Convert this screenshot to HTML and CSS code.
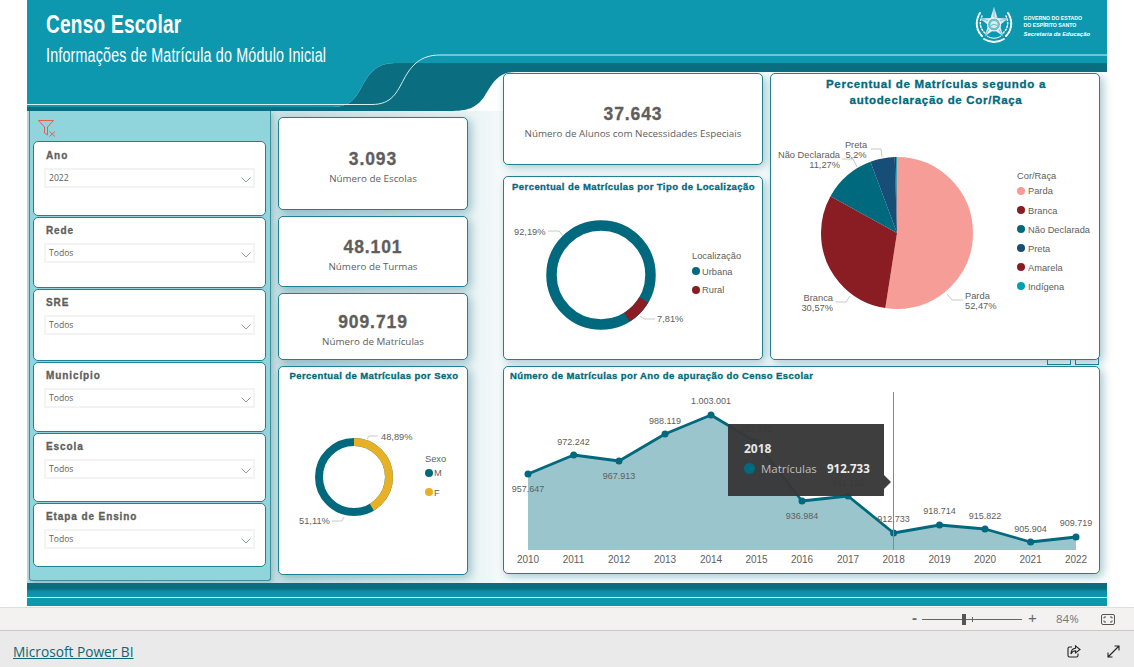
FILE: index.html
```html
<!DOCTYPE html>
<html lang="pt-BR">
<head>
<meta charset="utf-8">
<title>Censo Escolar</title>
<link rel="stylesheet" href="styles.css">
</head>
<body>
<main class="report">
  <header class="head">
    <svg class="head-bg" viewBox="27 0 1080 120" width="1080" height="120" aria-hidden="true">
      <path fill="#0d98b0" d="M27 0H1107V63H395C375 63 368 75 360 90C352 104 345 107 330 107H27Z"/>
      <path fill="#0b6e80" d="M27 107H330C345 107 352 104 360 90C368 75 375 63 395 63H1107V72H515C497 72 492 85 484 97C476 108 468 111 450 111H27Z"/>
      <path fill="none" stroke="#d5f0f4" stroke-width="1" d="M27 104.500H372C392 104.500 397 92 404 79C411 66 420 55 440 55H1107"/>
    </svg>
    <div class="head-text">
      <h1 class="title">Censo Escolar</h1>
      <p class="subtitle">Informações de Matrícula do Módulo Inicial</p>
    </div>
    <div class="brand">
      <svg class="crest" viewBox="0 0 38 38" width="38" height="38" aria-hidden="true">
        <g fill="none" stroke="#fff" stroke-linecap="round">
          <path stroke-width="2" stroke-dasharray="1.800 1.500" d="M7 30C1 24 0 15 5 7"/>
          <path stroke-width="1.500" stroke-dasharray="1.500 2" d="M10 27C5 23 4 16 7 10"/>
          <path stroke-width="2" stroke-dasharray="1.800 1.500" d="M31 30C37 24 38 15 33 7"/>
          <path stroke-width="1.500" stroke-dasharray="1.500 2" d="M28 27C33 23 34 16 31 10"/>
          <path stroke-width="1.800" d="M9 33C15 37 23 37 29 33"/>
          <path stroke-width="1" d="M12 30C16 33 22 33 26 30"/>
        </g>
        <path fill="#fff" fill-opacity=".82" d="M19 1L22.500 12L33 12.500L25 19L28 30L19 24L10 30L13 19L5 12.500L15.500 12Z"/>
        <path fill="none" stroke="#5fb8c8" stroke-width=".7" d="M19 1V11M22.500 12L19 11.500M33 12.500L24 15M28 30L23 22M10 30L15 22M5 12.500L14 15"/>
        <circle cx="19" cy="18.500" r="6.500" fill="#6fbecd" stroke="#fff" stroke-width="1"/>
        <circle cx="19" cy="18.500" r="3.500" fill="#d4eff3"/>
        <path fill="none" stroke="#4aa9bb" stroke-width=".8" d="M15.800 19.500Q19 17 22.200 19.500"/>
      </svg>
      <div class="brand-text">
        <span>GOVERNO DO ESTADO</span>
        <span>DO ESPÍRITO SANTO</span>
        <em>Secretaria da Educação</em>
      </div>
    </div>
  </header>

  <div class="body">
    <aside class="panel">
      <svg class="clear-icon" viewBox="0 0 18 17" width="18" height="17" aria-hidden="true">
        <path fill="none" stroke="#e2604f" stroke-width="1" d="M.5.500H15.500L9.500 7V15L6.500 13V7Z"/>
        <path fill="none" stroke="#e2604f" stroke-width="1" d="M11.500 11.500L17 16.500M17 11.500L11.500 16.500"/>
      </svg>
      <div class="filters">
        <section class="filter"><h2>Ano</h2><div class="drop"><span>2022</span><svg viewBox="0 0 10 6" width="10" height="6" aria-hidden="true"><path d="M.5.500L5 5L9.500.500"/></svg></div></section>
        <section class="filter"><h2>Rede</h2><div class="drop"><span>Todos</span><svg viewBox="0 0 10 6" width="10" height="6" aria-hidden="true"><path d="M.5.500L5 5L9.500.500"/></svg></div></section>
        <section class="filter"><h2>SRE</h2><div class="drop"><span>Todos</span><svg viewBox="0 0 10 6" width="10" height="6" aria-hidden="true"><path d="M.5.500L5 5L9.500.500"/></svg></div></section>
        <section class="filter"><h2>Município</h2><div class="drop"><span>Todos</span><svg viewBox="0 0 10 6" width="10" height="6" aria-hidden="true"><path d="M.5.500L5 5L9.500.500"/></svg></div></section>
        <section class="filter"><h2>Escola</h2><div class="drop"><span>Todos</span><svg viewBox="0 0 10 6" width="10" height="6" aria-hidden="true"><path d="M.5.500L5 5L9.500.500"/></svg></div></section>
        <section class="filter"><h2>Etapa de Ensino</h2><div class="drop"><span>Todos</span><svg viewBox="0 0 10 6" width="10" height="6" aria-hidden="true"><path d="M.5.500L5 5L9.500.500"/></svg></div></section>
      </div>
    </aside>

    <div class="col-mid">
      <section class="card kpi kpi-a"><strong>3.093</strong><span>Número de Escolas</span></section>
      <section class="card kpi kpi-b"><strong>48.101</strong><span>Número de Turmas</span></section>
      <section class="card kpi kpi-c"><strong>909.719</strong><span>Número de Matrículas</span></section>
      <section class="card chart-sex">
        <svg class="chart" viewBox="279 367 188 207" width="188" height="207">
          <text class="ctitle" x="374" y="379" text-anchor="middle">Percentual de Matrículas por Sexo</text>
          <g transform="rotate(-90 354 477)" fill="none" stroke-width="8">
            <circle cx="354" cy="477" r="35" stroke="#00697d"/>
            <circle cx="354" cy="477" r="35" stroke="#e8b025" pathLength="100" stroke-dasharray="48.89 100" stroke-dashoffset="7.4"/>
          </g>
          <path class="lead" d="M367 439L369 436H378M332 521H342L344 517"/>
          <text class="lbl" x="381" y="439.500">48,89%</text>
          <text class="lbl" x="299" y="523.500">51,11%</text>
          <text class="legh" x="425" y="462">Sexo</text>
          <circle cx="429" cy="473" r="4" fill="#00697d"/><text class="leg" x="434" y="476">M</text>
          <circle cx="429" cy="492" r="4" fill="#e8b025"/><text class="leg" x="434" y="495.500">F</text>
        </svg>
      </section>
    </div>

    <div class="col-right">
      <div class="peek peek-a"></div>
      <div class="peek peek-b"></div>
      <div class="stack">
        <section class="card kpi kpi-d"><strong>37.643</strong><span>Número de Alunos com Necessidades Especiais</span></section>
        <section class="card chart-loc">
          <svg class="chart" viewBox="504 177 258 182" width="258" height="182">
            <text class="ctitle" x="633.500" y="189.500" text-anchor="middle">Percentual de Matrículas por Tipo de Localização</text>
            <g transform="rotate(-90 601 275)" fill="none" stroke-width="10.500">
              <circle cx="601" cy="275" r="49.500" stroke="#00697d"/>
              <circle cx="601" cy="275" r="49.500" stroke="#8a1c24" pathLength="100" stroke-dasharray="7.81 100" stroke-dashoffset="-33.4"/>
            </g>
            <path class="lead" d="M548 231H559L563 236M640 316L644 319H655"/>
            <text class="lbl" x="514" y="234.500">92,19%</text>
            <text class="lbl" x="657" y="321.500">7,81%</text>
            <text class="legh" x="692" y="258.500">Localização</text>
            <circle cx="696" cy="271" r="4" fill="#00697d"/><text class="leg" x="702" y="274.500">Urbana</text>
            <circle cx="696" cy="290" r="4" fill="#8a1c24"/><text class="leg" x="702" y="293">Rural</text>
          </svg>
        </section>
      </div>
      <section class="card chart-pie">
        <svg class="chart" viewBox="771 74 328 285" width="328" height="285">
          <text class="ctitle ctitle-lg" x="936" y="88" text-anchor="middle">Percentual de Matrículas segundo a</text>
          <text class="ctitle ctitle-lg" x="936" y="104" text-anchor="middle">autodeclaração de Cor/Raça</text>
          <g transform="rotate(-90 897 233)" fill="none" stroke-width="76">
            <circle cx="897" cy="233" r="38" pathLength="100" stroke="#f59d96" stroke-dasharray="52.47 100"/>
            <circle cx="897" cy="233" r="38" pathLength="100" stroke="#8a1c24" stroke-dasharray="30.57 100" stroke-dashoffset="-52.47"/>
            <circle cx="897" cy="233" r="38" pathLength="100" stroke="#00697d" stroke-dasharray="11.27 100" stroke-dashoffset="-83.04"/>
            <circle cx="897" cy="233" r="38" pathLength="100" stroke="#164e78" stroke-dasharray="5.2 100" stroke-dashoffset="-94.31"/>
            <circle cx="897" cy="233" r="38" pathLength="100" stroke="#8a1c24" stroke-dasharray="0.3 100" stroke-dashoffset="-99.51"/>
            <circle cx="897" cy="233" r="38" pathLength="100" stroke="#00a0b4" stroke-dasharray="0.19 100" stroke-dashoffset="-99.81"/>
          </g>
          <path class="lead" d="M871 149H881L882 157M842 159H853L857 167M836 302H846L850 296M947 294L952 300H963"/>
          <text class="lbl" x="856" y="147.500" text-anchor="middle">Preta</text>
          <text class="lbl" x="856" y="157.500" text-anchor="middle">5,2%</text>
          <text class="lbl" x="840" y="157.500" text-anchor="end">Não Declarada</text>
          <text class="lbl" x="840" y="167.500" text-anchor="end">11,27%</text>
          <text class="lbl" x="833" y="300.500" text-anchor="end">Branca</text>
          <text class="lbl" x="833" y="310.500" text-anchor="end">30,57%</text>
          <text class="lbl" x="965" y="299">Parda</text>
          <text class="lbl" x="965" y="309">52,47%</text>
          <text class="legh" x="1017" y="179">Cor/Raça</text>
          <circle cx="1021" cy="191" r="4" fill="#f59d96"/><text class="leg" x="1028" y="194">Parda</text>
          <circle cx="1021" cy="210" r="4" fill="#8a1c24"/><text class="leg" x="1028" y="214">Branca</text>
          <circle cx="1021" cy="229" r="4" fill="#00697d"/><text class="leg" x="1028" y="233">Não Declarada</text>
          <circle cx="1021" cy="248" r="4" fill="#164e78"/><text class="leg" x="1028" y="252">Preta</text>
          <circle cx="1021" cy="267" r="4" fill="#8a1c24"/><text class="leg" x="1028" y="271">Amarela</text>
          <circle cx="1021" cy="286" r="4" fill="#00a0b4"/><text class="leg" x="1028" y="290">Indígena</text>
        </svg>
      </section>
      <section class="card chart-line">
        <svg class="chart" viewBox="504 367 595 206" width="595" height="206">
          <text class="ctitle" x="510" y="379">Número de Matrículas por Ano de apuração do Censo Escolar</text>
          <path fill="#9bc5cd" d="M528 474L573.700 455L619 461L665 434L711 415L756 442L802 501L848 496L893.600 533L939.500 525L985 529L1030.600 542L1076 537V550H528Z"/>
          <path fill="none" stroke="#00697d" stroke-width="2.800" stroke-linejoin="round" d="M528 474L573.700 455L619 461L665 434L711 415L756 442L802 501L848 496L893.600 533L939.500 525L985 529L1030.600 542L1076 537"/>
          <g fill="#00697d">
            <circle cx="528" cy="474" r="3.500"/><circle cx="573.700" cy="455" r="3.500"/><circle cx="619" cy="461" r="3.500"/><circle cx="665" cy="434" r="3.500"/><circle cx="711" cy="415" r="3.500"/><circle cx="756" cy="442" r="3.500"/><circle cx="802" cy="501" r="3.500"/><circle cx="848" cy="496" r="3.500"/><circle cx="893.600" cy="533" r="3.500"/><circle cx="939.500" cy="525" r="3.500"/><circle cx="985" cy="529" r="3.500"/><circle cx="1030.600" cy="542" r="3.500"/><circle cx="1076" cy="537" r="3.500"/>
          </g>
          <path stroke="#888" stroke-width="1" d="M893.500 392V550"/>
          <g class="pts" text-anchor="middle">
            <text x="528" y="491.500">957.647</text><text x="573.500" y="444.500">972.242</text><text x="619" y="478.500">967.913</text><text x="665" y="424">988.119</text><text x="711" y="404">1.003.001</text><text x="756" y="431.500">982.295</text><text x="802" y="518.500">936.984</text><text x="848" y="485.500">941.126</text><text x="893.600" y="521.500">912.733</text><text x="939.500" y="513.500">918.714</text><text x="985" y="518.500">915.822</text><text x="1030.600" y="531.500">905.904</text><text x="1076" y="525.500">909.719</text>
          </g>
          <g class="yrs" text-anchor="middle">
            <text x="528" y="563">2010</text><text x="573.500" y="563">2011</text><text x="619" y="563">2012</text><text x="665" y="563">2013</text><text x="711" y="563">2014</text><text x="756.500" y="563">2015</text><text x="802" y="563">2016</text><text x="848" y="563">2017</text><text x="893.600" y="563">2018</text><text x="939.500" y="563">2019</text><text x="985" y="563">2020</text><text x="1030.600" y="563">2021</text><text x="1076" y="563">2022</text>
          </g>
        </svg>
        <div class="tooltip">
          <b class="tip-year">2018</b>
          <div class="tip-row"><i class="tip-dot"></i><span class="tip-name">Matrículas</span><b class="tip-val">912.733</b></div>
        </div>
      </section>
    </div>
  </div>

  <div class="foot-bars"><div class="bar-top"></div><div class="bar-low"></div></div>
</main>

<div class="zoombar">
  <span class="z-minus">-</span>
  <div class="z-track"><i class="z-thumb"></i><i class="z-tick"></i></div>
  <span class="z-plus">+</span>
  <span class="z-pct">84%</span>
  <svg class="z-fit" viewBox="0 0 14 11" width="14" height="11" aria-hidden="true">
    <rect x=".5" y=".5" width="13" height="10" rx="1.500" fill="none" stroke="#555"/>
    <path fill="none" stroke="#555" d="M3 4.500V3H5M9 3H11V4.500M11 6.500V8H9M5 8H3V6.500"/>
  </svg>
</div>
<footer class="bi-bar">
  <a class="bi-link" href="#">Microsoft Power BI</a>
  <div class="bi-icons">
    <svg viewBox="0 0 14 13" width="14" height="13" aria-hidden="true">
      <path fill="none" stroke="#222" stroke-width="1.100" d="M5 2H2.500Q1 2 1 3.500V10.500Q1 12 2.500 12H9.500Q11 12 11 10.500V8.500"/>
      <path fill="none" stroke="#222" stroke-width="1.100" d="M8.500 .800L13 4.500L8.500 8V5.800C6 5.800 4.800 7 4 9C4 5.500 5.800 3.500 8.500 3.200Z"/>
    </svg>
    <svg viewBox="0 0 13 13" width="13" height="13" aria-hidden="true">
      <path fill="none" stroke="#222" stroke-width="1.100" d="M1 12L12 1M7.500 1H12V5.500M1 7.500V12H5.500"/>
    </svg>
  </div>
</footer>
</body>
</html>
```
FILE: styles.css
```css
* { box-sizing: border-box; }
html, body { margin: 0; padding: 0; }
body {
  width: 1134px;
  height: 667px;
  overflow: hidden;
  background: #fff;
  font-family: "Liberation Sans", Arial, sans-serif;
  color: #605e5c;
}

.report {
  width: 1080px;
  height: 606px;
  margin-left: 27px;
  display: flex;
  flex-direction: column;
  background: #fff;
}

/* Header */
.head {
  position: relative;
  height: 111px;
  flex: none;
  display: flex;
  justify-content: space-between;
  padding: 9px 17px 0 19px;
}
.head-bg { position: absolute; left: 0; top: 0; }
.head-text { position: relative; color: #fff; }
.title {
  margin: 0;
  font: 700 25px/30px "Liberation Sans", sans-serif;
  letter-spacing: .3px;
  white-space: nowrap;
  transform: scaleX(.763);
  transform-origin: left center;
}
.subtitle {
  margin: 5px 0 0;
  font: 400 20px/22px "Liberation Sans", sans-serif;
  letter-spacing: .25px;
  white-space: nowrap;
  transform: scaleX(.715);
  transform-origin: left center;
}
.brand { position: relative; display: flex; align-items: flex-start; gap: 11px; margin-top: -3px; }
.crest { flex: none; }
.brand-text {
  display: flex;
  flex-direction: column;
  color: #fff;
  font-size: 5.200px;
  font-weight: 700;
  line-height: 6.500px;
  padding-top: 9px;
}
.brand-text em { margin-top: 3px; font-weight: 700; font-size: 5.900px; }

/* Body */
.body {
  flex: none;
  height: 472px;
  display: flex;
  align-items: flex-start;
  padding-left: 2px;
  position: relative;
  background: linear-gradient(90deg, #b9d8de 0, #c9e1e5 250px, #eef6f7 460px, #fff 490px);
}
.panel {
  width: 242px;
  height: 470px;
  flex: none;
  background: #90d5dc;
  border: 1.500px solid #3e8d9b;
  border-top: 0;
  border-radius: 0 0 3px 3px;
  padding: 9px 4px 0 3px;
  box-shadow: 2px 2px 5px rgba(30, 115, 135, .3);
}
.clear-icon { display: block; margin-left: 5px; height: 17px; }
.filters {
  display: grid;
  grid-template-rows: 75px 71px 72px 70px 69px 64px;
  gap: 1px;
  margin-top: 4px;
}
.filter {
  background: #fff;
  border: 1px solid #1f8192;
  border-radius: 5px;
  padding: 7px 10px 0;
}
.filter h2 {
  margin: 0 0 0 2px;
  font-size: 10px;
  line-height: 11px;
  font-weight: 700;
  letter-spacing: .9px;
  color: #605e5c;
  -webkit-text-stroke: .3px #605e5c;
}
.drop {
  height: 20px;
  margin-top: 7px;
  border: 2px solid #f3f3f3;
  border-radius: 1px;
  display: flex;
  justify-content: space-between;
  align-items: center;
  padding: 0 2px 0 3px;
  font: 400 8.600px/12px "Open Sans", sans-serif;
  color: #605e5c;
}
.filter:first-child { padding-top: 8px; }
.drop span { margin-top: -1px; }
.drop svg { margin-top: 3px; fill: none; stroke: #8f99ab; stroke-width: 1; }

/* Cards */
.card {
  background: #fff;
  border: 1px solid #1f8192;
  border-radius: 5px;
  box-shadow: 3px 3px 10px rgba(30, 115, 135, .4);
}
.col-mid {
  width: 190px;
  flex: none;
  margin-left: 7px;
  padding-top: 6px;
  display: flex;
  flex-direction: column;
  gap: 6px;
}
.kpi {
  display: flex;
  flex-direction: column;
  align-items: center;
  justify-content: center;
  padding-top: 6px;
  gap: 3px;
}
.kpi strong {
  font-size: 17.500px;
  line-height: 20px;
  letter-spacing: .9px;
  color: #605e5c;
  -webkit-text-stroke: .3px #605e5c;
}
.kpi span {
  font: 400 9.800px/13px "Open Sans", sans-serif;
  color: #605e5c;
}
.kpi-a { height: 93px; }
.kpi-b { height: 71px; }
.kpi-c { height: 67px; }
.kpi-d { height: 92px; }
.chart-sex { height: 209px; }

.col-right {
  position: relative;
  flex: none;
  width: 597px;
  margin-left: 35px;
  margin-top: -38px;
  display: grid;
  grid-template-columns: 260px 330px;
  grid-template-rows: 287px 208px;
  column-gap: 7px;
  row-gap: 6px;
}
.stack { display: flex; flex-direction: column; gap: 11px; }
.chart-loc { height: 184px; }
.chart-pie { position: relative; }
.chart-line { grid-column: 1 / 3; position: relative; }
.chart { display: block; }
.peek {
  position: absolute;
  top: 280px;
  width: 24px;
  height: 12px;
  border: 1px solid #1f8192;
  background: #fff;
}
.peek-a { left: 544px; }
.peek-b { left: 572px; }

/* Chart text */
.ctitle {
  font-size: 9.500px;
  font-weight: 700;
  letter-spacing: .42px;
  fill: #00697d;
  stroke: #00697d;
  stroke-width: .3px;
}
.ctitle-lg { font-size: 11.500px; letter-spacing: .7px; }
.lbl, .leg, .legh { font-size: 9.300px; fill: #605e5c; }
.lead { fill: none; stroke: #c8c8c8; stroke-width: 1; }
.pts text { font-size: 9px; fill: #605e5c; }
.yrs text { font-size: 10px; fill: #605e5c; }

/* Tooltip */
.tooltip {
  position: absolute;
  left: 224px;
  top: 57px;
  width: 156px;
  height: 72px;
  background: rgba(56, 56, 56, .97);
  padding: 17px 0 0 16px;
  color: #e6e6e6;
}
.tooltip::after {
  content: "";
  position: absolute;
  right: -7px;
  top: 51px;
  border-left: 7px solid rgba(56, 56, 56, .97);
  border-top: 7px solid transparent;
  border-bottom: 7px solid transparent;
}
.tip-year { display: block; font: 700 12px/16px "Open Sans", sans-serif; }
.tip-row { display: flex; align-items: center; margin-top: 4px; font-family: "Open Sans", sans-serif; }
.tip-dot { width: 11px; height: 11px; border-radius: 50%; background: #00697d; margin-right: 6px; flex: none; }
.tip-name { font-size: 11.500px; color: #bdbdbd; width: 66px; }
.tip-val { font-size: 11.500px; color: #ececec; }

/* Bottom bars */
.foot-bars { flex: none; height: 23px; display: flex; flex-direction: column; gap: 1px; background: #d8eef2; }
.bar-top { height: 14px; background: linear-gradient(#0b6e80 0, #0b6e80 40%, #0d8ea8 60%, #0d98b0 100%); }
.bar-low { height: 8px; background: #0d98b0; }

/* Zoom bar */
.zoombar {
  height: 24px;
  margin-top: 1px;
  background: #f3f2f1;
  border-top: 1px solid #dedede;
  border-bottom: 1px solid #c8c8c8;
  display: flex;
  align-items: center;
  padding-left: 912px;
  color: #666;
}
.z-minus { width: 10px; font-size: 15px; font-weight: 700; line-height: 16px; margin-top: -2px; }
.z-track { position: relative; width: 100px; height: 1px; background: #666; }
.z-thumb { position: absolute; left: 40px; top: -5px; width: 4px; height: 11px; background: #555; }
.z-tick { position: absolute; left: 50px; top: -2px; width: 1px; height: 5px; background: #666; }
.z-plus { margin-left: 6px; width: 10px; font-size: 15px; line-height: 16px; margin-top: -2px; }
.z-pct { margin-left: 18px; width: 24px; font: 400 11.500px/14px "Open Sans", sans-serif; color: #777; }
.z-fit { margin-left: 21px; }

/* Power BI bar */
.bi-bar {
  height: 37px;
  background: #eaeaea;
  display: flex;
  align-items: center;
  justify-content: space-between;
  padding: 4px 14px 0 13px;
}
.bi-link {
  font: 400 13.700px/18px "Open Sans", sans-serif;
  color: #0d6675;
  text-decoration: underline;
}
.bi-icons { display: flex; gap: 26px; align-items: center; }
```
